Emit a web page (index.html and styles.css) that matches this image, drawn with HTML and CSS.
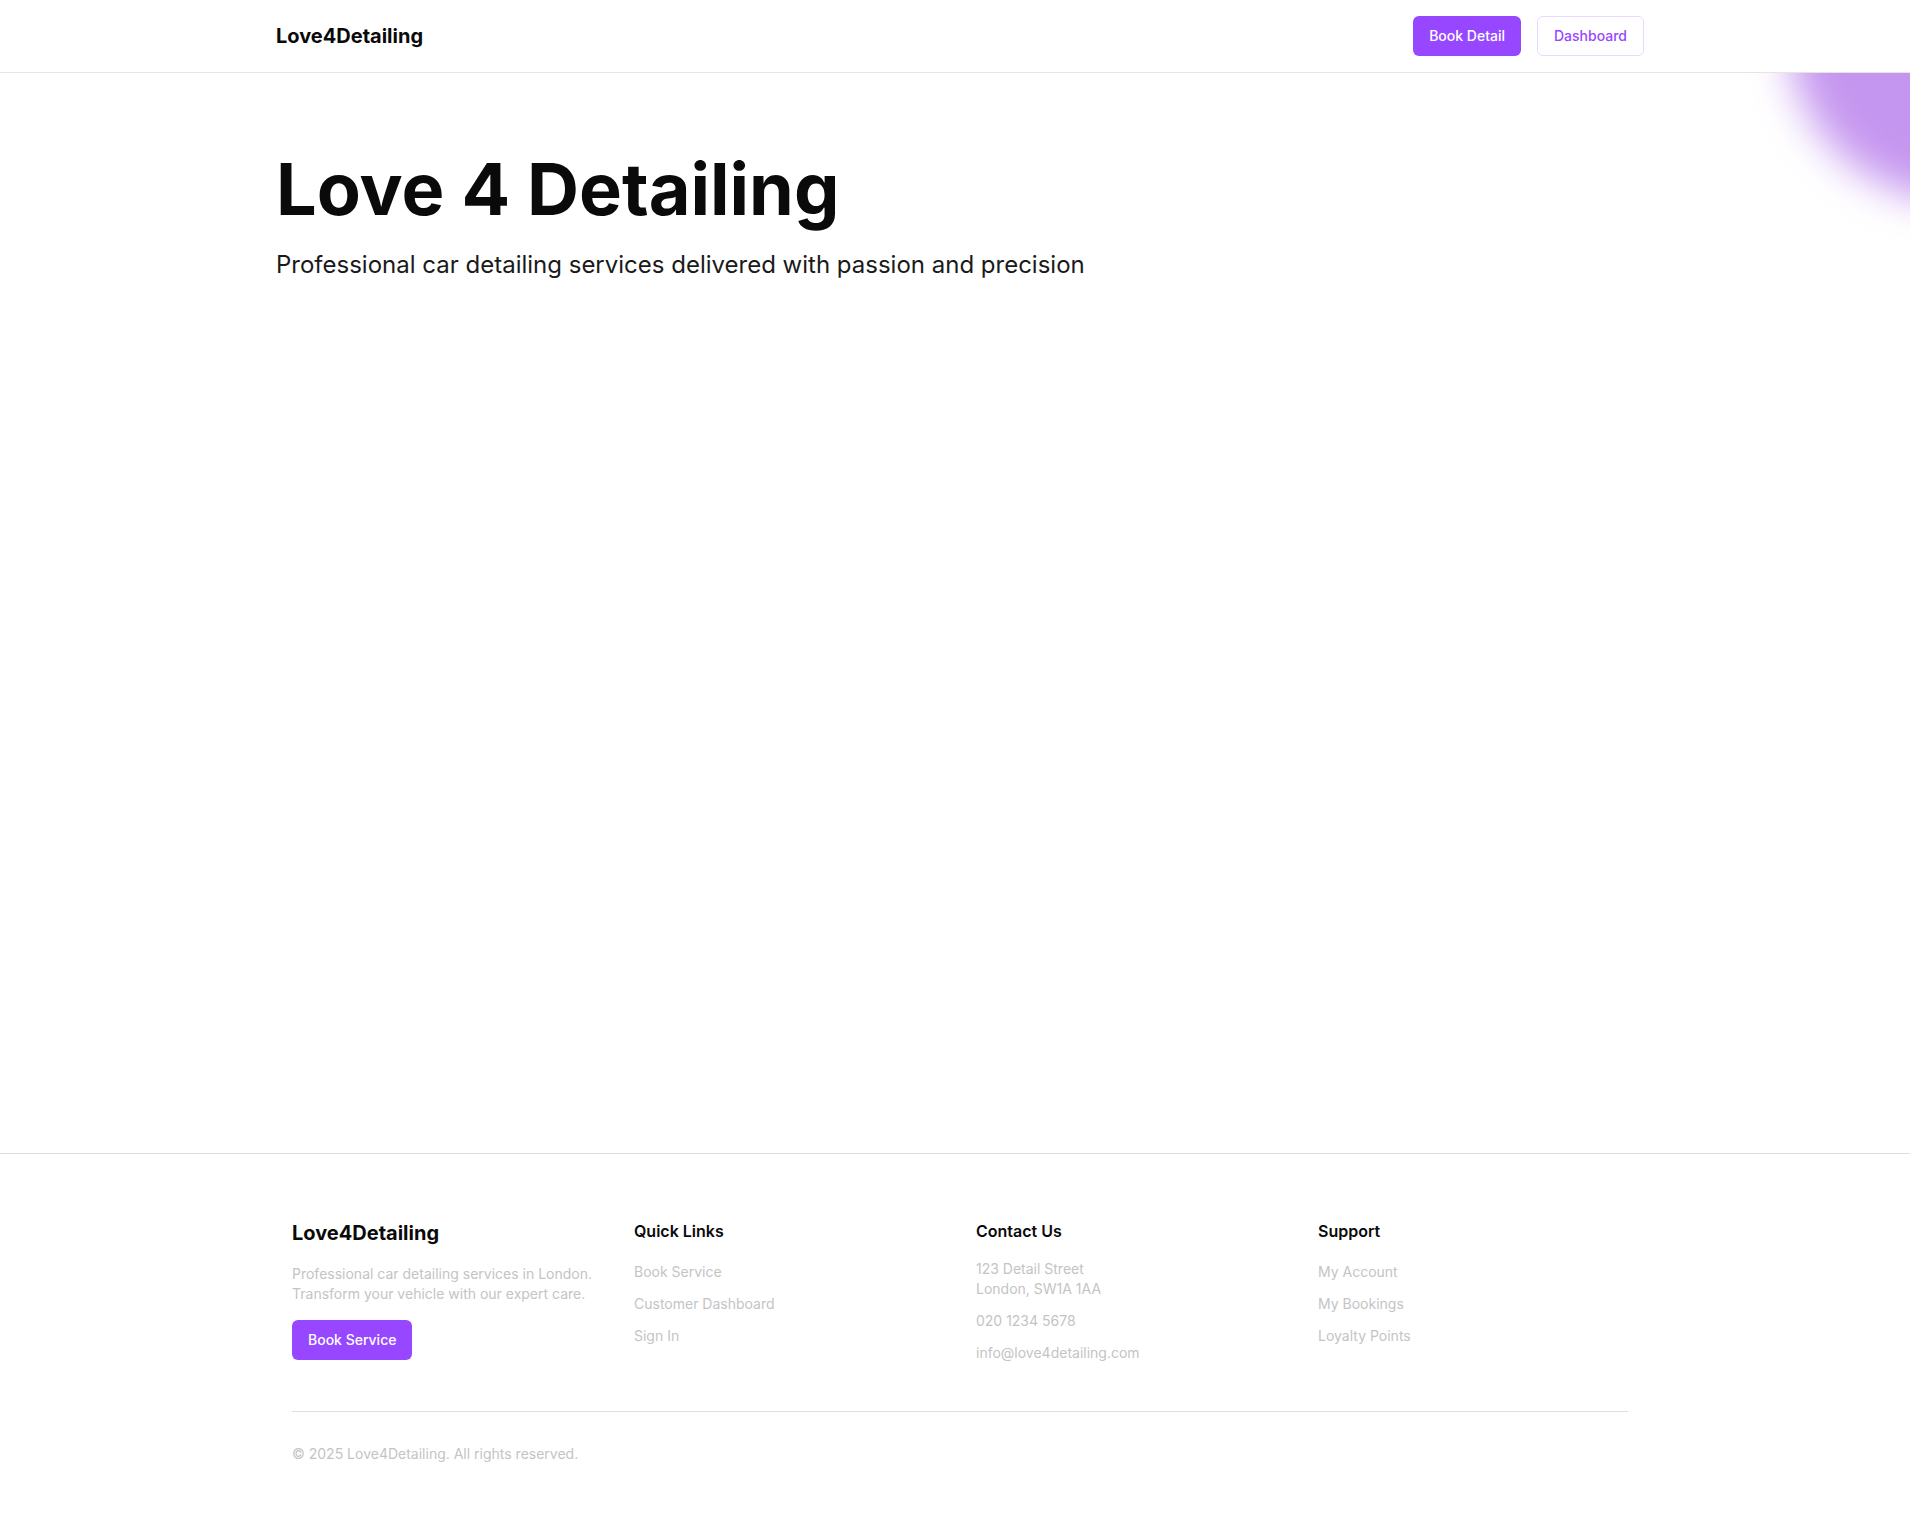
FILE: index.html
```html
<!DOCTYPE html>
<html lang="en">
<head>
<meta charset="utf-8">
<title>Love4Detailing</title>
<link rel="stylesheet" href="styles.css">
</head>
<body>
<header class="site-header">
  <div class="container header-inner">
    <a class="brand" href="#">Love4Detailing</a>
    <nav class="header-actions">
      <a class="btn btn-primary" href="#">Book Detail</a>
      <a class="btn btn-outline" href="#">Dashboard</a>
    </nav>
  </div>
</header>
<main class="hero">
  <div class="blob"></div>
  <div class="container hero-inner">
    <h1 class="hero-title">Love 4 Detailing</h1>
    <p class="hero-sub">Professional car detailing services delivered with passion and precision</p>
  </div>
</main>
<footer class="site-footer">
  <div class="container footer-inner">
    <div class="footer-grid">
      <div class="footer-col">
        <div class="footer-brand">Love4Detailing</div>
        <p class="footer-desc">Professional car detailing services in London.<br>Transform your vehicle with our expert care.</p>
        <a class="btn btn-primary" href="#">Book Service</a>
      </div>
      <div class="footer-col">
        <h3 class="footer-heading">Quick Links</h3>
        <ul class="footer-links">
          <li><a href="#">Book Service</a></li>
          <li><a href="#">Customer Dashboard</a></li>
          <li><a href="#">Sign In</a></li>
        </ul>
      </div>
      <div class="footer-col">
        <h3 class="footer-heading">Contact Us</h3>
        <div class="contact-list">
          <p>123 Detail Street<br>London, SW1A 1AA</p>
          <p>020 1234 5678</p>
          <p>info@love4detailing.com</p>
        </div>
      </div>
      <div class="footer-col">
        <h3 class="footer-heading">Support</h3>
        <ul class="footer-links">
          <li><a href="#">My Account</a></li>
          <li><a href="#">My Bookings</a></li>
          <li><a href="#">Loyalty Points</a></li>
        </ul>
      </div>
    </div>
    <div class="footer-bottom">
      <p>&copy; 2025 Love4Detailing. All rights reserved.</p>
    </div>
  </div>
</footer>
</body>
</html>
```
FILE: styles.css
```css
* { box-sizing: border-box; }
html, body { margin: 0; padding: 0; }
body {
  font-family: Inter, "Noto Sans", "Liberation Sans", sans-serif;
  color: #0a0a0a;
  background: #ffffff;
  min-height: 100vh;
  display: flex;
  flex-direction: column;
  overflow-x: hidden;
}
a { text-decoration: none; color: inherit; }
p, h1, h3, ul { margin: 0; padding: 0; }
ul { list-style: none; }

.container {
  width: 1400px;
  margin-left: calc(50% - 695px);
  padding: 0 16px;
}

.site-header {
  height: 73px;
  border-bottom: 1px solid #e5e5e5;
  background: #fff;
  position: relative;
  z-index: 2;
}
.header-inner {
  height: 72px;
  display: flex;
  align-items: center;
  justify-content: space-between;
}
.brand {
  font-size: 20px;
  font-weight: 700;
  line-height: 28px;
  color: #0a0a0a;
}
.header-actions {
  display: flex;
  gap: 16px;
}
.btn {
  display: inline-flex;
  align-items: center;
  justify-content: center;
  height: 40px;
  padding: 0 16px;
  border-radius: 6px;
  font-size: 14px;
  font-weight: 500;
  line-height: 20px;
}
.btn-primary {
  background: #9747ff;
  color: #fff;
}
.btn-outline {
  background: #fff;
  color: #9747ff;
  border: 1px solid #ead9ff;
}

.hero {
  flex: 1;
  position: relative;
  overflow: hidden;
}
.blob {
  position: absolute;
  top: -212px;
  right: -218px;
  width: 340px;
  height: 340px;
  border-radius: 50%;
  background: #c596ef;
  filter: blur(20px);
}
.hero-inner {
  position: relative;
  padding-top: 80px;
}
.hero-title {
  font-size: 72px;
  line-height: 72px;
  font-weight: 700;
  letter-spacing: 0;
  color: #0a0a0a;
  margin-bottom: 24px;
}
.hero-sub {
  font-size: 24px;
  line-height: 32px;
  color: #1a1a1a;
}

.site-footer {
  border-top: 1px solid #e2dfd8;
  background: #fff;
}
.footer-inner {
  padding: 65px 32px 63px;
}
.footer-grid {
  display: grid;
  grid-template-columns: repeat(4, 1fr);
  gap: 32px;
}
.footer-brand {
  font-size: 20px;
  line-height: 28px;
  font-weight: 700;
  margin-bottom: 17px;
}
.footer-desc {
  font-size: 14px;
  line-height: 20px;
  color: #c4c4c4;
  margin-bottom: 16px;
}
.footer-heading {
  font-size: 16px;
  line-height: 24px;
  font-weight: 600;
  margin-bottom: 16px;
}
.footer-links {
  display: flex;
  flex-direction: column;
  gap: 8px;
  padding-top: 1px;
}
.footer-links li {
  font-size: 14px;
  line-height: 24px;
  color: #c4c4c4;
}
.contact-list {
  display: flex;
  flex-direction: column;
  gap: 12px;
}
.contact-list p {
  font-size: 14px;
  line-height: 20px;
  color: #c4c4c4;
}
.footer-bottom {
  margin-top: 48px;
  border-top: 1px solid #e2dfd8;
  padding-top: 32px;
}
.footer-bottom p {
  font-size: 14px;
  line-height: 20px;
  color: #c4c4c4;
}
```
